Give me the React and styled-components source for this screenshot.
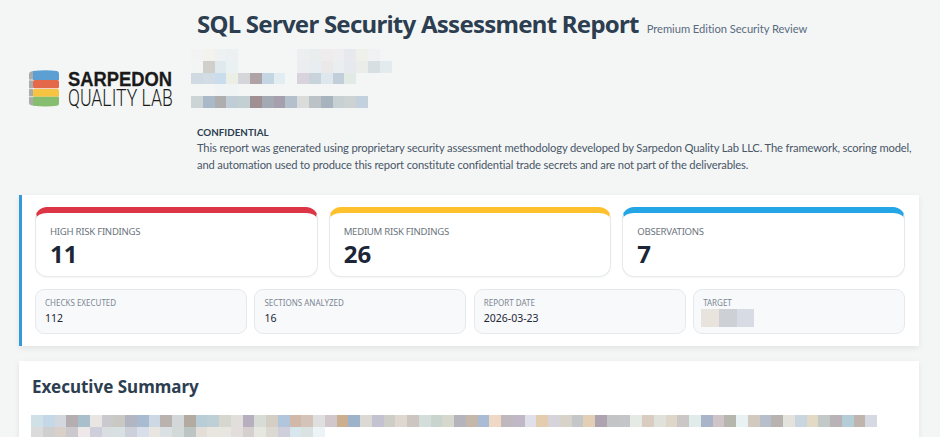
import React from 'react'
import styled, { createGlobalStyle } from 'styled-components'

const GlobalStyle = createGlobalStyle`
    html, body {
        margin: 0;
        padding: 0;
        height: 437px;
        overflow: hidden;
        background: #f4f6f6;
    }
    body {
        font-family: "Noto Sans", "Open Sans", sans-serif;
        color: #2c3e50;
    }
`

const nameRows = [
    ['#f3f3f3', '#f3f2ec', '#eef1f2', '#ecf0f2', null, null, null, null, null, '#eceef0', '#eaedee', '#efecee', '#eeeef0', '#e7e9ee', '#eff0ea', '#f0f1f2'],
    ['#f3f4f4', '#d1cfcc', '#dfe9ee', '#eaf1f3', null, null, null, null, null, '#ebedef', '#e7edf0', '#ebe8ea', '#eaeef0', '#e6e9ed', '#ebedea', '#d8dfe3', '#e3ebee'],
    ['#d0dae3', '#d2dce4', '#c9ddec', '#ecefe6', '#d5d6d9', '#b0a3a5', '#c4d6e4', '#e2edf1', null, '#d8d3dc', '#c8d3db', '#dfe7ee', '#c2ced9', '#e2eae6'],
    [null, null, '#f0f4f5', '#f1f4f4'],
    ['#cdd4d6', '#a9b9c8', '#aeaeae', '#c0ccd6', '#c3d0d3', '#a09093', '#a3aab4', '#a59fae', '#b4c0cc', '#dadcdb', '#bcc3c6', '#a7b4bd', '#c7d0d2', '#cdd2d2', '#c3d1df'],
]

const summaryRows = [
    ['#cfe0e6', '#c5d8e8', '#d3d8de', '#b5aeb0', '#a9c0cc', '#e8e5e2', '#c9c9ce', '#c9c8c2', '#b1b6c2', '#a9bbd0', '#ccd8e4', '#b9b2ae', '#d4d7da', '#b3aaa0', '#b9cdd6', '#bfcfd6', '#d6d8cf', '#e1dfdc', '#b7afbd', '#d7ddd6', '#d4cec4', '#b1c6dc', '#d1b8a8', '#d3c3b8', '#e0dfe0', '#d2c7ca', '#cbaf90', '#9db3c9', '#dcd8d4', '#c3c2d0', '#cfcdc8', '#dfd8d0', '#cdc6c0', '#d3ddd9', '#cad4cf', '#d6d8ce', '#b5b3bb', '#c5b8ab', '#aabbd6', '#efd8c4', '#c0b8bf', '#c0b8c6', '#e0e0ea', '#e4cdae', '#d6d4da', '#d7d2ca', '#c5c6c8', '#e2cfb6', '#ada3b1', '#c3c4c6', '#c3c5c6', '#e5eae5', '#d8cdc0', '#e0e1da', '#dfd6ca', '#cbc7c6', '#dfecea', '#aab4c9', '#cfc5c8', '#b6b6ae', '#e8f2f3', '#d2cabf', '#b7bfcc', '#b8b3ae', '#e3e2dd', '#c9d6e0', '#e3dac6', '#c3c9c6', '#b9b2b6', '#b5cdd6', '#bfb5ae', '#d6d9e2'],
    ['#dcdbdb', '#d0cfd0', '#d9d0ca', '#cbc8ce', '#eee8e8', '#cfcfdc', '#d9dfe0', '#d9e0e2', '#cdd0da', '#d9dfea', '#e9e5e0', '#dae0e4', '#d2d9d6', '#bdc4c4', '#e3dfd8', '#e9e6e0', '#e8e6e0', '#e3dedb', '#d6cfcf', '#e6e8e0', '#dcd8d4', '#cfcfdc', '#d8e6ee', '#dbe3e2', '#eef3f8'],
]

const targetRows = [['#e8e4dd', '#cdd0d4', '#d7dbe3']]

const stats = [
    { label: 'HIGH RISK FINDINGS', value: '11', color: '#dc3545' },
    { label: 'MEDIUM RISK FINDINGS', value: '26', color: '#ffc02e' },
    { label: 'OBSERVATIONS', value: '7', color: '#24a6e6' },
]

const facts = [
    { label: 'CHECKS EXECUTED', value: '112' },
    { label: 'SECTIONS ANALYZED', value: '16' },
    { label: 'REPORT DATE', value: '2026-03-23' },
]

function Mosaic({ rows, size = 11.76, height = 11.8, className }) {
    return (
        <MosaicBox className={className}>
            {rows.map((row, r) => (
                <MosaicRow key={r} style={{ height }}>
                    {row.map((c, i) => (
                        <span key={i} style={{ width: size, background: c || 'transparent' }} />
                    ))}
                </MosaicRow>
            ))}
        </MosaicBox>
    )
}

function Logo() {
    return (
        <LogoSvg width="178" height="48" viewBox="0 0 178 48" aria-label="Sarpedon Quality Lab">
            <path d="M1 8 Q1 5.500 5 5 V39.500 Q1 39 1 37 Z" fill="#a9abad" />
            <path d="M5 5 Q18 3.500 29 5 Q31 5.500 31 7.500 V14 H5 Z" fill="#5b9fd3" />
            <rect x="5" y="14" width="26" height="8.300" rx="1.500" fill="#e4694a" />
            <rect x="5" y="23" width="26" height="7.700" rx="1.500" fill="#f6c342" />
            <path d="M5 30.700 H31 V37.500 Q31 39.500 29 39.800 Q18 41 5 39.800 Z" fill="#86bd6f" />
            <path d="M1 14 H5 M1 22.600 H5 M1 30.700 H5" stroke="#f4f6f6" strokeWidth="0.800" />
            <LogoTop x="40" y="20" textLength="104" lengthAdjust="spacingAndGlyphs">SARPEDON</LogoTop>
            <LogoBottom transform="translate(40 40) scale(0.75 1)">QUALITY LAB</LogoBottom>
        </LogoSvg>
    )
}

export default function App() {
    return (
        <Page>
            <GlobalStyle />
            <Header>
                <LogoBox>
                    <Logo />
                </LogoBox>
                <HeaderText>
                    <TitleRow>
                        <Title>SQL Server Security Assessment Report</Title>
                        <Subtitle>Premium Edition Security Review</Subtitle>
                    </TitleRow>
                    <NameMosaic rows={nameRows} size={11.8} />
                    <Notice>
                        <strong>CONFIDENTIAL</strong>
                        <p>This report was generated using proprietary security assessment methodology developed by Sarpedon Quality Lab LLC. The framework, scoring model, and automation used to produce this report constitute confidential trade secrets and are not part of the deliverables.</p>
                    </Notice>
                </HeaderText>
            </Header>

            <SummaryPanel>
                <StatGrid>
                    {stats.map((s) => (
                        <StatCard key={s.label} $color={s.color}>
                            <StatLabel>{s.label}</StatLabel>
                            <StatValue>{s.value}</StatValue>
                        </StatCard>
                    ))}
                </StatGrid>
                <FactGrid>
                    {facts.map((f) => (
                        <FactCard key={f.label}>
                            <FactLabel>{f.label}</FactLabel>
                            <FactValue>{f.value}</FactValue>
                        </FactCard>
                    ))}
                    <FactCard>
                        <FactLabel>TARGET</FactLabel>
                        <TargetMosaic rows={targetRows} size={17.7} height={18} />
                    </FactCard>
                </FactGrid>
            </SummaryPanel>

            <Section>
                <SectionTitle>Executive Summary</SectionTitle>
                <Mosaic rows={summaryRows} />
            </Section>
        </Page>
    )
}

const Page = styled.div`
    width: 940px;
    height: 437px;
    overflow: hidden;
    display: flex;
    flex-direction: column;
    padding: 0 21px 0 19px;
    box-sizing: border-box;
`

const Header = styled.header`
    display: flex;
    height: 195px;
    flex: none;
`

const LogoBox = styled.div`
    flex: none;
    width: 178px;
    box-sizing: border-box;
    padding: 66px 0 0 9px;
`

const LogoSvg = styled.svg`
    display: block;
    margin-right: -9px;
`

const LogoTop = styled.text`
    font-family: "Liberation Sans", sans-serif;
    font-weight: 700;
    font-size: 21px;
    fill: #1a1a1a;
    stroke: #1a1a1a;
    stroke-width: 0.3px;
`

const LogoBottom = styled.text`
    font-family: "Roboto", "Liberation Sans", sans-serif;
    font-weight: 300;
    font-size: 23.500px;
    fill: #1a1a1a;
`

const HeaderText = styled.div`
    flex: 1;
    min-width: 0;
    padding-top: 7px;
`

const TitleRow = styled.div`
    display: flex;
    align-items: baseline;
    gap: 8px;
    height: 42px;
`

const Title = styled.h1`
    margin: 0;
    font-size: 24px;
    line-height: 34px;
    font-weight: 700;
    letter-spacing: -0.75px;
    color: #2c3e50;
    white-space: nowrap;
`

const Subtitle = styled.span`
    font-family: "Lato", "Noto Sans", sans-serif;
    font-size: 11.200px;
    letter-spacing: -0.05px;
    color: #5a6b80;
    white-space: nowrap;
`

const MosaicBox = styled.div`
    display: flex;
    flex-direction: column;
`

const MosaicRow = styled.div`
    display: flex;
    flex: none;
    span {
        flex: none;
        height: 100%;
    }
`

const NameMosaic = styled(Mosaic)`
    margin-left: -6px;
`

const Notice = styled.div`
    margin-top: 16px;
    font-family: "Lato", "Noto Sans", sans-serif;
    font-size: 11.200px;
    line-height: 16.500px;
    letter-spacing: -0.15px;
    color: #495767;
    strong {
        display: block;
        font-size: 9.800px;
        letter-spacing: 0;
        color: #2c3e50;
        font-weight: 700;
    }
    p {
        margin: 0;
    }
`

const SummaryPanel = styled.section`
    flex: none;
    height: 151px;
    box-sizing: border-box;
    background: #fff;
    border-left: 3px solid #3498db;
    padding: 12px 14px 12px 13px;
    box-shadow: 0 2px 6px rgba(0, 0, 0, 0.08);
    display: flex;
    flex-direction: column;
    gap: 12px;
`

const StatGrid = styled.div`
    display: grid;
    grid-template-columns: repeat(3, 1fr);
    gap: 11px;
`

const StatCard = styled.div`
    height: 70px;
    box-sizing: border-box;
    background: #fff;
    border: 1px solid #e6e9ec;
    border-top: 6px solid ${(p) => p.$color};
    border-radius: 12px;
    padding: 12px 14px 0;
    box-shadow: 0 1px 2px rgba(0, 0, 0, 0.04);
`

const StatLabel = styled.div`
    font-size: 9.600px;
    line-height: 14px;
    letter-spacing: -0.27px;
    color: #6c757d;
`

const StatValue = styled.div`
    font-size: 24px;
    line-height: 30px;
    font-weight: 700;
    color: #1c2636;
`

const FactGrid = styled.div`
    display: grid;
    grid-template-columns: repeat(4, 1fr);
    gap: 7.500px;
`

const FactCard = styled.div`
    height: 45px;
    box-sizing: border-box;
    background: #f8f9fa;
    border: 1px solid #e6e9ec;
    border-radius: 9px;
    padding: 7px 9px 0;
`

const FactLabel = styled.div`
    font-size: 8px;
    line-height: 12px;
    color: #7b8794;
`

const FactValue = styled.div`
    font-size: 10.500px;
    line-height: 18px;
    color: #1c2636;
`

const TargetMosaic = styled(Mosaic)`
    margin: 0 0 0 -2px;
`

const Section = styled.section`
    flex: none;
    margin-top: 15px;
    height: 120px;
    box-sizing: border-box;
    background: #fff;
    padding: 12px 12px 0;
    box-shadow: 0 2px 6px rgba(0, 0, 0, 0.08);
`

const SectionTitle = styled.h2`
    margin: 0 0 15px 1px;
    font-size: 17px;
    line-height: 27px;
    font-weight: 700;
    color: #2c3e50;
`
